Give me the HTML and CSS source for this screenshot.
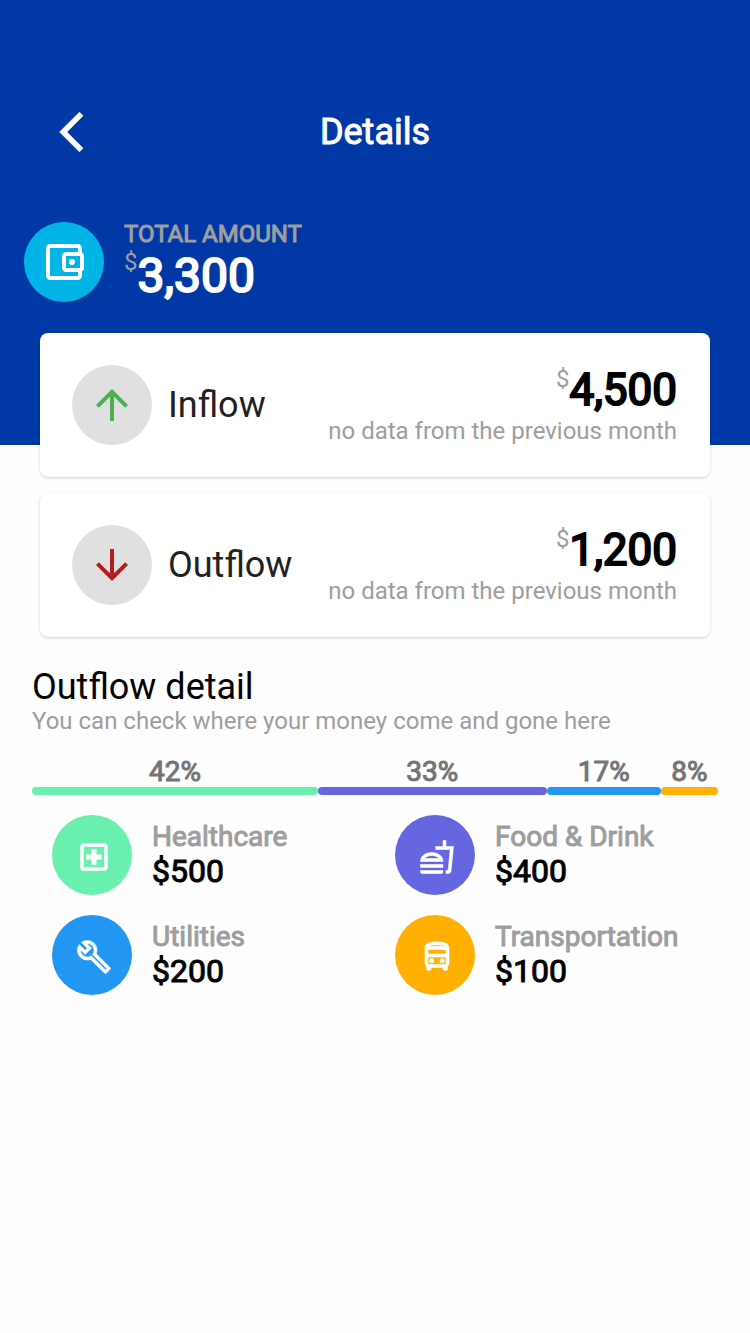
FILE: index.html
```html
<!DOCTYPE html>
<html lang="en">
<head>
<meta charset="utf-8">
<meta name="viewport" content="width=device-width, initial-scale=1">
<title>Details</title>
<link rel="stylesheet" href="styles.css">
</head>
<body>
<header class="hero">
  <div class="appbar">
    <button class="back" type="button" aria-label="Back">
      <svg class="icon" viewBox="0 0 24 24"><path d="M17.51 3.87L15.73 2.1 5.84 12l9.9 9.9 1.77-1.77L9.38 12l8.13-8.13z"/></svg>
    </button>
    <h1 class="title strong">Details</h1>
  </div>
  <div class="total">
    <span class="disc disc-cyan">
      <svg class="icon" viewBox="0 0 24 24"><path d="M21 7.28V5c0-1.1-.9-2-2-2H5c-1.11 0-2 .9-2 2v14c0 1.1.89 2 2 2h14c1.1 0 2-.9 2-2v-2.28c.59-.35 1-.98 1-1.72V9c0-.74-.41-1.38-1-1.72zM20 9v6h-7V9h7zM5 19V5h14v2h-6c-1.1 0-2 .9-2 2v6c0 1.1.9 2 2 2h6v2H5z"/><circle cx="16" cy="12" r="1.5"/></svg>
    </span>
    <div>
      <div class="total-label strong">TOTAL AMOUNT</div>
      <div class="amount amount-total"><span class="currency">$</span><span class="figure">3,300</span></div>
    </div>
  </div>
</header>
<main>
  <section class="cards">
    <article class="card">
      <span class="disc disc-grey green">
        <svg class="icon" viewBox="0 0 24 24"><path d="M4 12l1.41 1.41L11 7.83V20h2V7.83l5.58 5.59L20 12l-8-8-8 8z"/></svg>
      </span>
      <h2 class="card-name">Inflow</h2>
      <div class="card-value">
        <div class="amount"><span class="currency">$</span><span class="figure">4,500</span></div>
        <div class="note">no data from the previous month</div>
      </div>
    </article>
    <article class="card">
      <span class="disc disc-grey red">
        <svg class="icon" viewBox="0 0 24 24"><path d="M20 12l-1.41-1.41L13 16.17V4h-2v12.17l-5.58-5.59L4 12l8 8 8-8z"/></svg>
      </span>
      <h2 class="card-name">Outflow</h2>
      <div class="card-value">
        <div class="amount"><span class="currency">$</span><span class="figure">1,200</span></div>
        <div class="note">no data from the previous month</div>
      </div>
    </article>
  </section>
  <section class="detail">
    <h2 class="detail-title">Outflow detail</h2>
    <p class="note">You can check where your money come and gone here</p>
    <div class="bars">
      <div class="bar strong mint">42%</div>
      <div class="bar strong violet">33%</div>
      <div class="bar strong blue">17%</div>
      <div class="bar strong amber">8%</div>
    </div>
    <ul class="items">
      <li class="item">
        <span class="disc disc-small mint">
          <svg class="icon" viewBox="0 0 24 24"><path d="M19 3H5c-1.1 0-1.99.9-1.99 2L3 19c0 1.1.9 2 2 2h14c1.1 0 2-.9 2-2V5c0-1.1-.9-2-2-2zm0 16H5V5h14v14zm-8.5-2h3v-3.5H17v-3h-3.5V7h-3v3.5H7v3h3.5V17z"/></svg>
        </span>
        <div><div class="item-name strong">Healthcare</div><div class="item-value strong">$500</div></div>
      </li>
      <li class="item">
        <span class="disc disc-small violet">
          <svg class="icon" viewBox="0 0 24 24"><path d="M1 21.98c0 .56.45 1.01 1.01 1.01H15c.56 0 1.01-.45 1.01-1.01V21H1v.98zM8.5 8.99C4.75 8.99 1 11 1 15h15c0-4-3.75-6.01-7.5-6.01zM3.62 13c1.11-1.55 3.47-2.01 4.88-2.01s3.77.46 4.88 2.01H3.62zM1 17h15v2H1zM18 5V1h-2v4h-5l.23 2h9.56l-1.4 14H18v2h1.72c.84 0 1.53-.65 1.63-1.47L23 5h-5z"/></svg>
        </span>
        <div><div class="item-name strong">Food &amp; Drink</div><div class="item-value strong">$400</div></div>
      </li>
      <li class="item">
        <span class="disc disc-small blue">
          <svg class="icon" viewBox="0 0 24 24"><path d="M22.61 18.99l-9.08-9.08c.93-2.34.45-5.1-1.44-7C9.79.61 6.21.4 3.66 2.26L7.5 6.11 6.08 7.52 2.25 3.69C.39 6.23.6 9.82 2.9 12.11c1.86 1.86 4.57 2.35 6.89 1.48l9.11 9.11c.39.39 1.02.39 1.41 0l2.3-2.3c.4-.38.4-1.01 0-1.41zm-3 1.6l-9.46-9.46c-.61.45-1.29.72-2 .82-1.36.2-2.79-.21-3.83-1.25C3.37 9.76 2.93 8.5 3 7.26l3.09 3.09 4.24-4.24-3.09-3.09c1.24-.07 2.49.37 3.44 1.31 1.08 1.08 1.49 2.57 1.24 3.96-.12.71-.42 1.37-.88 1.96l9.45 9.45-.88.89z"/></svg>
        </span>
        <div><div class="item-name strong">Utilities</div><div class="item-value strong">$200</div></div>
      </li>
      <li class="item">
        <span class="disc disc-small amber">
          <svg class="icon" viewBox="0 0 24 24"><path d="M12 2c-4.42 0-8 .5-8 4v10c0 .88.39 1.67 1 2.22V20c0 .55.45 1 1 1h1c.55 0 1-.45 1-1v-1h8v1c0 .55.45 1 1 1h1c.55 0 1-.45 1-1v-1.78c.61-.55 1-1.34 1-2.22V6c0-3.5-3.58-4-8-4zm5.66 2.99H6.34C6.89 4.46 8.31 4 12 4s5.11.46 5.66.99zm.34 2V10H6V6.99h12zm-.34 9.74l-.29.27H6.63l-.29-.27C6.21 16.62 6 16.37 6 16v-4h12v4c0 .37-.21.62-.34.73z"/><circle cx="8.5" cy="14.5" r="1.5"/><circle cx="15.5" cy="14.5" r="1.5"/></svg>
        </span>
        <div><div class="item-name strong">Transportation</div><div class="item-value strong">$100</div></div>
      </li>
    </ul>
  </section>
</main>
</body>
</html>
```
FILE: styles.css
```css
* { box-sizing: border-box; }
body {
  margin: 0;
  background: #fefefe;
  color: #000;
  font-family: Roboto, "Liberation Sans", sans-serif;
}
h1, h2, p, ul { margin: 0; padding: 0; font-weight: 400; }
ul { list-style: none; }
.strong { -webkit-text-stroke: 1px currentColor; }
.figure { -webkit-text-stroke: 2px currentColor; }

.hero {
  background: #0038a5;
  color: #fff;
  padding: 104px 24px 141px;
}
.appbar {
  display: grid;
  grid-template-columns: 48px 1fr 48px;
  align-items: center;
  height: 56px;
  padding: 0 24px;
}
.back {
  display: flex;
  padding: 0;
  border: 0;
  background: none;
  color: inherit;
}
.back .icon { stroke: currentColor; stroke-width: 0.4; }
.title {
  text-align: center;
  font-size: 36px;
  line-height: 50px;
}
.icon { display: block; width: 48px; height: 48px; fill: currentColor; }

.total {
  display: flex;
  align-items: center;
  gap: 20px;
  padding-top: 60px;
}
.disc {
  display: flex;
  flex: none;
  align-items: center;
  justify-content: center;
  width: 80px;
  height: 80px;
  border-radius: 50%;
  color: #fff;
}
.disc-cyan { background: #00b4e6; }
.disc-grey { background: #e0e0e0; }
.green { color: #4caf50; }
.red { color: #b71c1c; }
.mint { --tone: #69f0ae; }
.violet { --tone: #6666e0; }
.blue { --tone: #2196f3; }
.amber { --tone: #ffb000; }
.disc-small { padding: 4px 0 0 4px; background: var(--tone); }
.disc-small .icon {
  width: 36px;
  height: 36px;
  stroke: currentColor;
  stroke-width: 0.4;
}

.total-label {
  color: #9e9e9e;
  font-size: 24px;
  line-height: 28px;
}
.amount {
  display: flex;
  align-items: flex-start;
  justify-content: flex-end;
  padding-bottom: 2px;
  font-size: 44px;
  line-height: 50px;
}
.amount-total {
  justify-content: flex-start;
  padding-bottom: 0;
  font-size: 48px;
  line-height: 56px;
}
.currency {
  color: #9e9e9e;
  font-size: 24px;
  line-height: 28px;
}

.cards {
  display: grid;
  gap: 16px;
  margin-top: -112px;
  padding: 0 40px;
}
.card {
  display: flex;
  align-items: center;
  gap: 16px;
  padding: 32px 33px 32px 32px;
  border-radius: 8px;
  background: #fff;
  box-shadow: 0 1px 3px rgba(0, 0, 0, 0.18);
}
.card-name { color: #212121; font-size: 36px; line-height: 44px; }
.card-value { margin-left: auto; text-align: right; }
.note { color: #9e9e9e; font-size: 24px; line-height: 28px; }

.detail { padding: 30px 32px; }
.detail-title { font-size: 36px; line-height: 40px; }
.bars { display: flex; padding-top: 22px; }
.bar {
  flex: 1;
  text-align: center;
  color: #757575;
  font-size: 28px;
  line-height: 30px;
}
.bar::after {
  content: "";
  display: block;
  height: 8px;
  border-radius: 4px;
  background: var(--tone);
}
.bar.mint { flex-grow: 5; }
.bar.violet { flex-grow: 4; }
.bar.blue { flex-grow: 2; }
.items {
  display: grid;
  grid-template-columns: 1fr 1fr;
  gap: 20px 0;
  padding-top: 20px;
}
.item { display: flex; align-items: center; gap: 20px; padding-left: 20px; }
.item-name { color: #9e9e9e; font-size: 28px; line-height: 32px; }
.item-value { font-size: 32px; line-height: 36px; }
```
